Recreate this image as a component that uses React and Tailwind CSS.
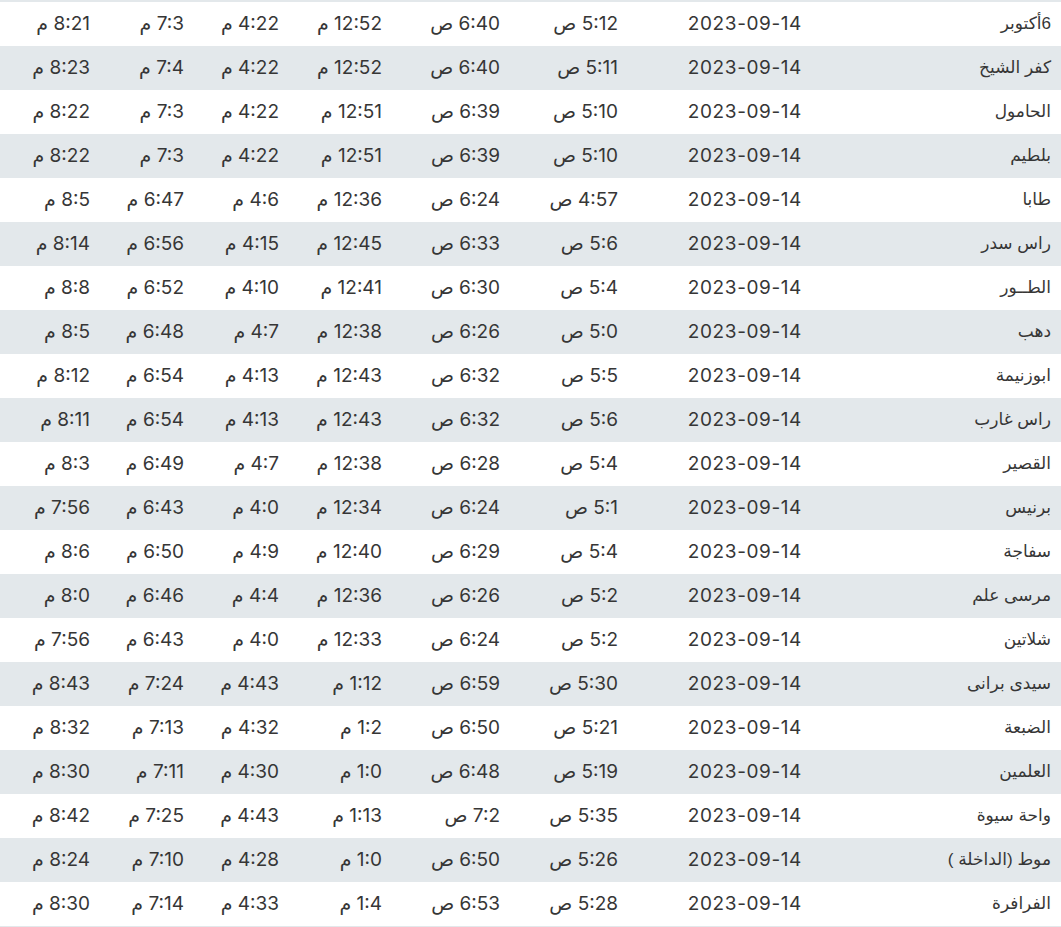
const rows = [
  ['6أكتوبر', '5:12 ص', '6:40 ص', '12:52 م', '4:22 م', '7:3 م', '8:21 م'],
  ['كفر الشيخ', '5:11 ص', '6:40 ص', '12:52 م', '4:22 م', '7:4 م', '8:23 م'],
  ['الحامول', '5:10 ص', '6:39 ص', '12:51 م', '4:22 م', '7:3 م', '8:22 م'],
  ['بلطيم', '5:10 ص', '6:39 ص', '12:51 م', '4:22 م', '7:3 م', '8:22 م'],
  ['طابا', '4:57 ص', '6:24 ص', '12:36 م', '4:6 م', '6:47 م', '8:5 م'],
  ['راس سدر', '5:6 ص', '6:33 ص', '12:45 م', '4:15 م', '6:56 م', '8:14 م'],
  ['الطــور', '5:4 ص', '6:30 ص', '12:41 م', '4:10 م', '6:52 م', '8:8 م'],
  ['دهب', '5:0 ص', '6:26 ص', '12:38 م', '4:7 م', '6:48 م', '8:5 م'],
  ['ابوزنيمة', '5:5 ص', '6:32 ص', '12:43 م', '4:13 م', '6:54 م', '8:12 م'],
  ['راس غارب', '5:6 ص', '6:32 ص', '12:43 م', '4:13 م', '6:54 م', '8:11 م'],
  ['القصير', '5:4 ص', '6:28 ص', '12:38 م', '4:7 م', '6:49 م', '8:3 م'],
  ['برنيس', '5:1 ص', '6:24 ص', '12:34 م', '4:0 م', '6:43 م', '7:56 م'],
  ['سفاجة', '5:4 ص', '6:29 ص', '12:40 م', '4:9 م', '6:50 م', '8:6 م'],
  ['مرسى علم', '5:2 ص', '6:26 ص', '12:36 م', '4:4 م', '6:46 م', '8:0 م'],
  ['شلاتين', '5:2 ص', '6:24 ص', '12:33 م', '4:0 م', '6:43 م', '7:56 م'],
  ['سيدى برانى', '5:30 ص', '6:59 ص', '1:12 م', '4:43 م', '7:24 م', '8:43 م'],
  ['الضبعة', '5:21 ص', '6:50 ص', '1:2 م', '4:32 م', '7:13 م', '8:32 م'],
  ['العلمين', '5:19 ص', '6:48 ص', '1:0 م', '4:30 م', '7:11 م', '8:30 م'],
  ['واحة سيوة', '5:35 ص', '7:2 ص', '1:13 م', '4:43 م', '7:25 م', '8:42 م'],
  ['موط (الداخلة )', '5:26 ص', '6:50 ص', '1:0 م', '4:28 م', '7:10 م', '8:24 م'],
  ['الفرافرة', '5:28 ص', '6:53 ص', '1:4 م', '4:33 م', '7:14 م', '8:30 م'],
];

const date = '2023-09-14';

export default function App() {
  return (
    <div dir="rtl" className="min-h-screen bg-white font-['Inter','DejaVu_Sans',sans-serif] text-[#363636]">
      <div className="h-[2px] bg-[#e3e8eb]" />
      <table className="w-[1061px] table-fixed border-collapse border-b border-[#e3e8eb]">
        <colgroup>
          <col className="w-[249px]" />
          <col className="w-[184px]" />
          <col className="w-[118px]" />
          <col className="w-[118px]" />
          <col className="w-[103px]" />
          <col className="w-[95px]" />
          <col className="w-[94px]" />
          <col className="w-[100px]" />
        </colgroup>
        <tbody>
          {rows.map(([city, ...times], i) => (
            <tr key={city} className={i % 2 ? 'h-[44px] bg-[#e3e8eb]' : 'h-[44px] bg-white'}>
              <td className="pr-[10px] text-right align-middle text-[17px] font-['Liberation_Sans','DejaVu_Sans',sans-serif] whitespace-nowrap">{city}</td>
              <td className="pr-[10px] text-right align-middle text-[19px] tracking-[0.6px] whitespace-nowrap">
                <span dir="ltr">{date}</span>
              </td>
              {times.map((t, j) => (
                <td key={j} className="pr-[10px] text-right align-middle text-[19px] whitespace-nowrap">{t}</td>
              ))}
            </tr>
          ))}
        </tbody>
      </table>
    </div>
  );
}
